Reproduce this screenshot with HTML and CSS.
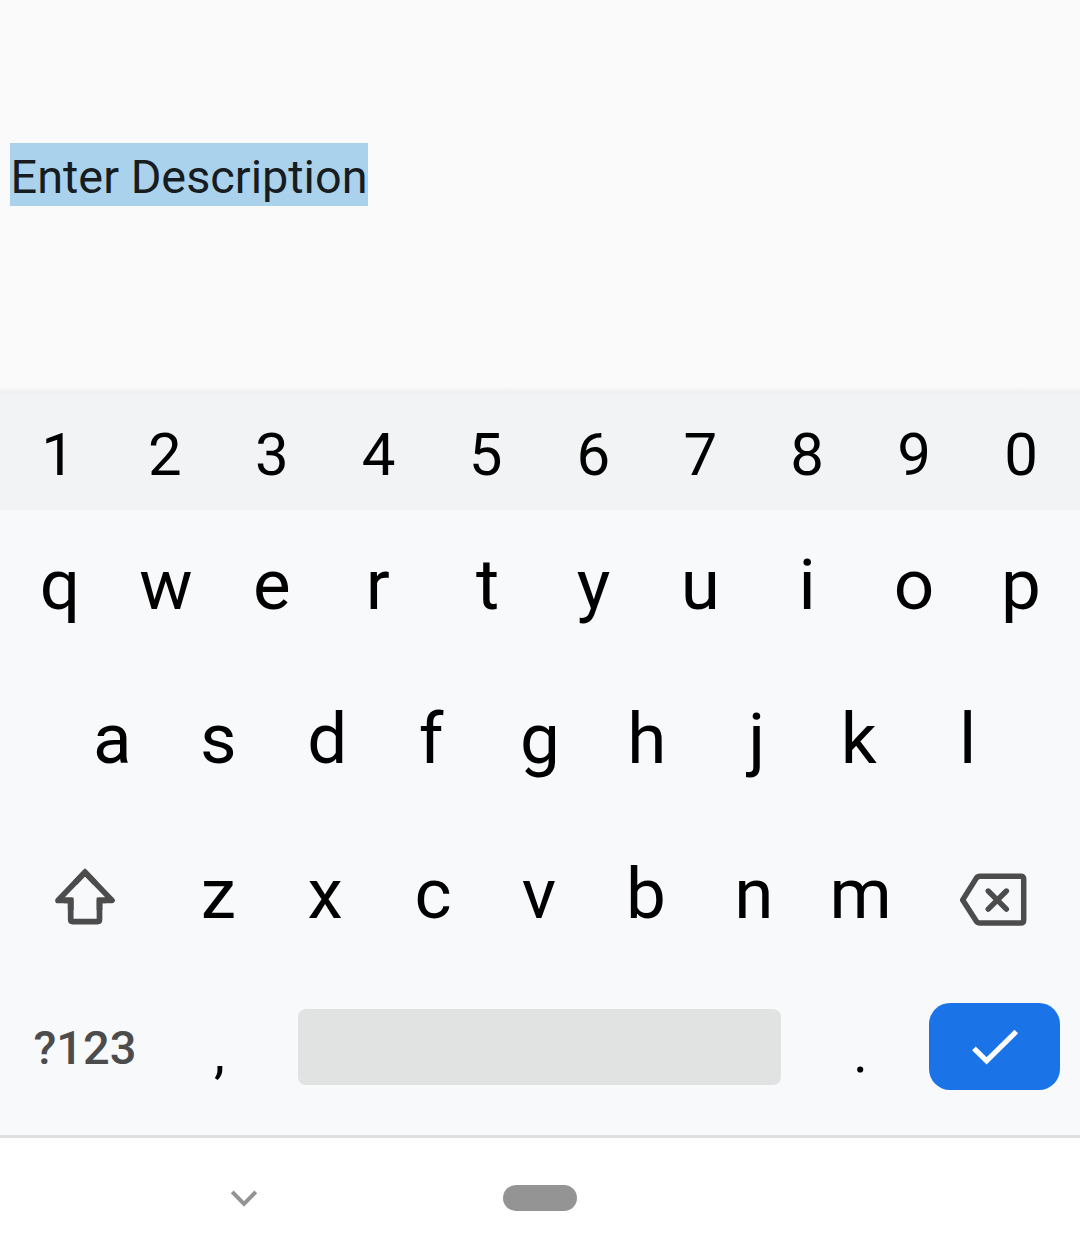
FILE: index.html
```html
<!DOCTYPE html>
<html lang="en">
<head>
<meta charset="utf-8">
<title>Description</title>
<link rel="stylesheet" href="styles.css">
</head>
<body>
<main class="editor"><span class="selection">Enter Description</span></main>
<section class="keyboard">
  <div class="row numbers"><span class="left">1</span><span class="left">2</span><span class="left">3</span><span class="left">4</span><span class="left">5</span><span>6</span><span>7</span><span>8</span><span>9</span><span>0</span></div>
  <div class="row top"><span class="right">q</span><span>w</span><span class="left">e</span><span class="left2">r</span><span class="right">t</span><span>y</span><span>u</span><span>i</span><span>o</span><span>p</span></div>
  <div class="row home"><span>a</span><span class="left">s</span><span class="right">d</span><span class="left2">f</span><span>g</span><span>h</span><span class="right3">j</span><span class="left2">k</span><span>l</span></div>
  <div class="row lower">
    <svg class="shift" viewBox="50 862 70 70" width="70" height="70" fill="none" stroke="#4c4c4c" stroke-width="5.7">
      <path stroke-linejoin="round" d="M85 872.3L112 900.4H99.5V919.6Q99.5 921.6 97.5 921.6H72.7Q70.7 921.6 70.7 919.6V900.4H58Z"/>
      <path d="M75 882.8L85 872.3L95 882.8M64 900.4H70.7V910M106 900.4H99.5V910"/>
    </svg>
    <span>z</span><span>x</span><span class="right">c</span><span>v</span><span>b</span><span class="right">n</span><span class="right">m</span>
    <svg class="backspace" viewBox="955 865 76 70" width="76" height="70" fill="none" stroke="#4c4c4c" stroke-width="5.5" stroke-linejoin="round" stroke-linecap="round">
      <path d="M962.7 899.9L976.2 878.4Q977.6 876.3 980 876.3H1020.7Q1023.7 876.3 1023.7 879.3V920.1Q1023.7 923.1 1020.7 923.1H980Q977.6 923.1 976.2 921Z"/>
      <path stroke-width="5.4" d="M988.2 891L1006.4 909.2M1006.4 891L988.2 909.2"/>
    </svg>
  </div>
  <div class="row bottom">
    <span class="symbols">?123</span>
    <span class="punct comma">,</span>
    <span class="space"></span>
    <span class="punct period">.</span>
    <span class="enter">
      <svg viewBox="969 1026 52 42" width="52" height="42" fill="none" stroke="#fff" stroke-width="5.2"><path d="M973.9 1048.3L986.6 1060.9L1016.3 1031.5"/></svg>
    </span>
  </div>
</section>
<nav class="navbar">
  <svg class="hide" viewBox="228 1186 32 24" width="32" height="24" fill="none" stroke="#949494" stroke-width="4"><path d="M232.2 1191.8L244 1203.8L255.8 1191.8"/></svg>
  <span class="pill"></span>
</nav>
</body>
</html>
```
FILE: styles.css
```css
* { box-sizing: border-box; }
body {
  margin: 0;
  width: 1080px;
  height: 1260px;
  overflow: hidden;
  display: flex;
  flex-direction: column;
  background: #fafafa;
  font-family: Roboto, "Liberation Sans", sans-serif;
  color: #000;
}
.editor { height: 388px; padding: 143px 10px 0; }
.selection {
  display: inline-block;
  width: 358px;
  height: 63px;
  padding-left: 0.6px;
  line-height: 69px;
  font-size: 46.8px;
  white-space: nowrap;
  color: #171c20;
  background: #abd2ec;
}
.keyboard { height: 747px; background: #f8f9fb; }
.row { display: flex; justify-content: center; align-items: center; font-size: 71px; line-height: 1; }
.row > span { width: 106.9px; text-align: center; }
.left { text-indent: -2px; }
.left2 { text-indent: -4px; }
.right { text-indent: 2px; }
.right3 { text-indent: 6px; }
.numbers {
  height: 122px;
  padding-top: 11px;
  font-size: 60px;
  background: linear-gradient(#f7f7f7, #f0f0f0 4px, #f1f3f4 6px);
}
.top { height: 150px; padding-bottom: 2px; }
.home { height: 157px; }
.lower { height: 154px; padding-bottom: 2px; }
.shift { margin: 8px 45px 0 0; }
.backspace { margin: 14px -1px 0 42px; }
.bottom { height: 164px; padding: 0 20px 12px 0; }
.row > .symbols { width: 166px; padding-left: 4px; font-size: 47px; font-weight: 500; color: #4c4c4c; }
.row > .punct { font-size: 55px; padding-top: 13px; }
.row > .comma { width: 132px; padding-right: 25px; }
.row > .space { width: 483px; height: 76px; border-radius: 8px; background: #e0e3e1; }
.row > .period { width: 148px; padding-left: 11px; }
.row > .enter {
  display: flex;
  justify-content: center;
  align-items: center;
  width: 131px;
  height: 87px;
  margin-bottom: 1px;
  border-radius: 21px;
  background: #1b73e8;
}
.navbar {
  flex: 1;
  display: flex;
  align-items: flex-start;
  border-top: 3px solid #e0e0e0;
  background: #fff;
}
.hide { margin: 48px 0 0 228px; }
.pill { width: 74px; height: 26.5px; margin: 46.5px 0 0 243px; border-radius: 14px; background: #949494; }
```
